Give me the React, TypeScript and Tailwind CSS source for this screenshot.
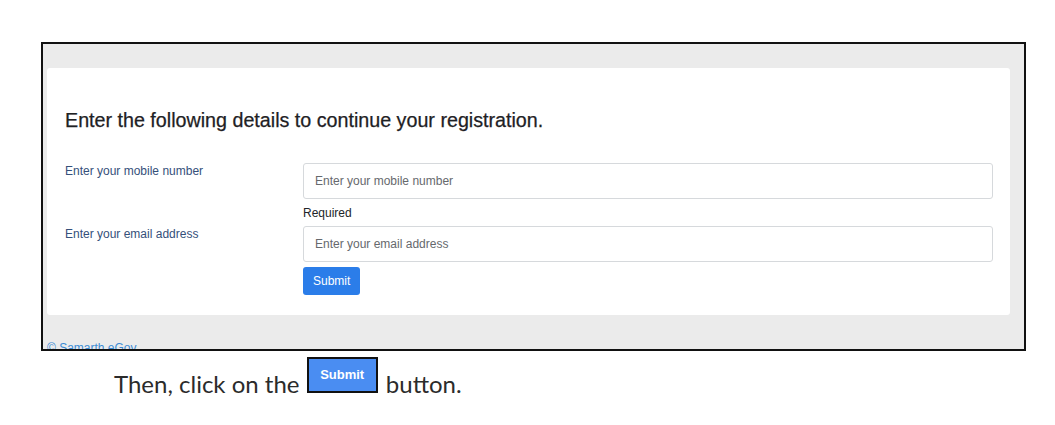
import React from 'react';

const sans = { fontFamily: '"Liberation Sans", Arial, sans-serif' };

function RegistrationFrame() {
  return (
    <div className="w-[985px] h-[309px] border-2 border-[#111] bg-[#ebebeb] overflow-hidden">
      <div className="pt-[24px] pl-[4px] pr-[14px]">
        <div className="bg-white rounded-[3px] h-[247px] pt-[40px] pl-[18px] pr-[17px]">
          <h2 className="text-[19.7px] leading-[24px] text-[#1e2124] [-webkit-text-stroke:0.25px_#1e2124]">
            Enter the following details to continue your registration.
          </h2>

          <div className="flex mt-[31px]">
            <label className="w-[238px] shrink-0 text-[12px] leading-[16px] text-[#35507a]">
              Enter your mobile number
            </label>
            <div className="flex-1">
              <input
                className="w-full h-[36px] border border-[#d6d9dc] rounded-[3px] pl-[11px] text-[12px] outline-none placeholder:text-[#66696d]"
                placeholder="Enter your mobile number"
              />
              <div className="mt-[6px] text-[12px] leading-[16px] text-[#212529]">Required</div>
            </div>
          </div>

          <div className="flex mt-[5px]">
            <label className="w-[238px] shrink-0 text-[12px] leading-[16px] text-[#35507a]">
              Enter your email address
            </label>
            <div className="flex-1">
              <input
                className="w-full h-[36px] border border-[#d6d9dc] rounded-[3px] pl-[11px] text-[12px] outline-none placeholder:text-[#66696d]"
                placeholder="Enter your email address"
              />
              <button className="mt-[5px] h-[28px] px-[10px] rounded-[3px] bg-[#2b7de9] text-white text-[12px]">
                Submit
              </button>
            </div>
          </div>
        </div>
        {/* cut by the frame's bottom edge, as in the screenshot */}
        <div className="mt-[25px] text-[12px] leading-[16px] text-[#3d8bd4]">© Samarth eGov</div>
      </div>
    </div>
  );
}

export default function App() {
  return (
    <div className="w-[1055px] h-[425px] bg-white overflow-hidden" style={sans}>
      <div className="pt-[42px] pl-[41px]">
        <RegistrationFrame />
      </div>
      <p className="pl-[114px] mt-[6px] text-[24px] leading-[40px] text-[#2b2b2b] font-[Lato,sans-serif]">
        Then, click on the{' '}
        <span className="inline-block overflow-hidden align-baseline ml-[1px] mr-[2px] w-[71px] h-[36px] border-2 border-[#111] bg-[#4a8df2] text-white text-[13px] font-bold leading-[32px] text-center font-[Arial,'Liberation_Sans',sans-serif]">
          Submit
        </span>{' '}
        button.
      </p>
    </div>
  );
}
